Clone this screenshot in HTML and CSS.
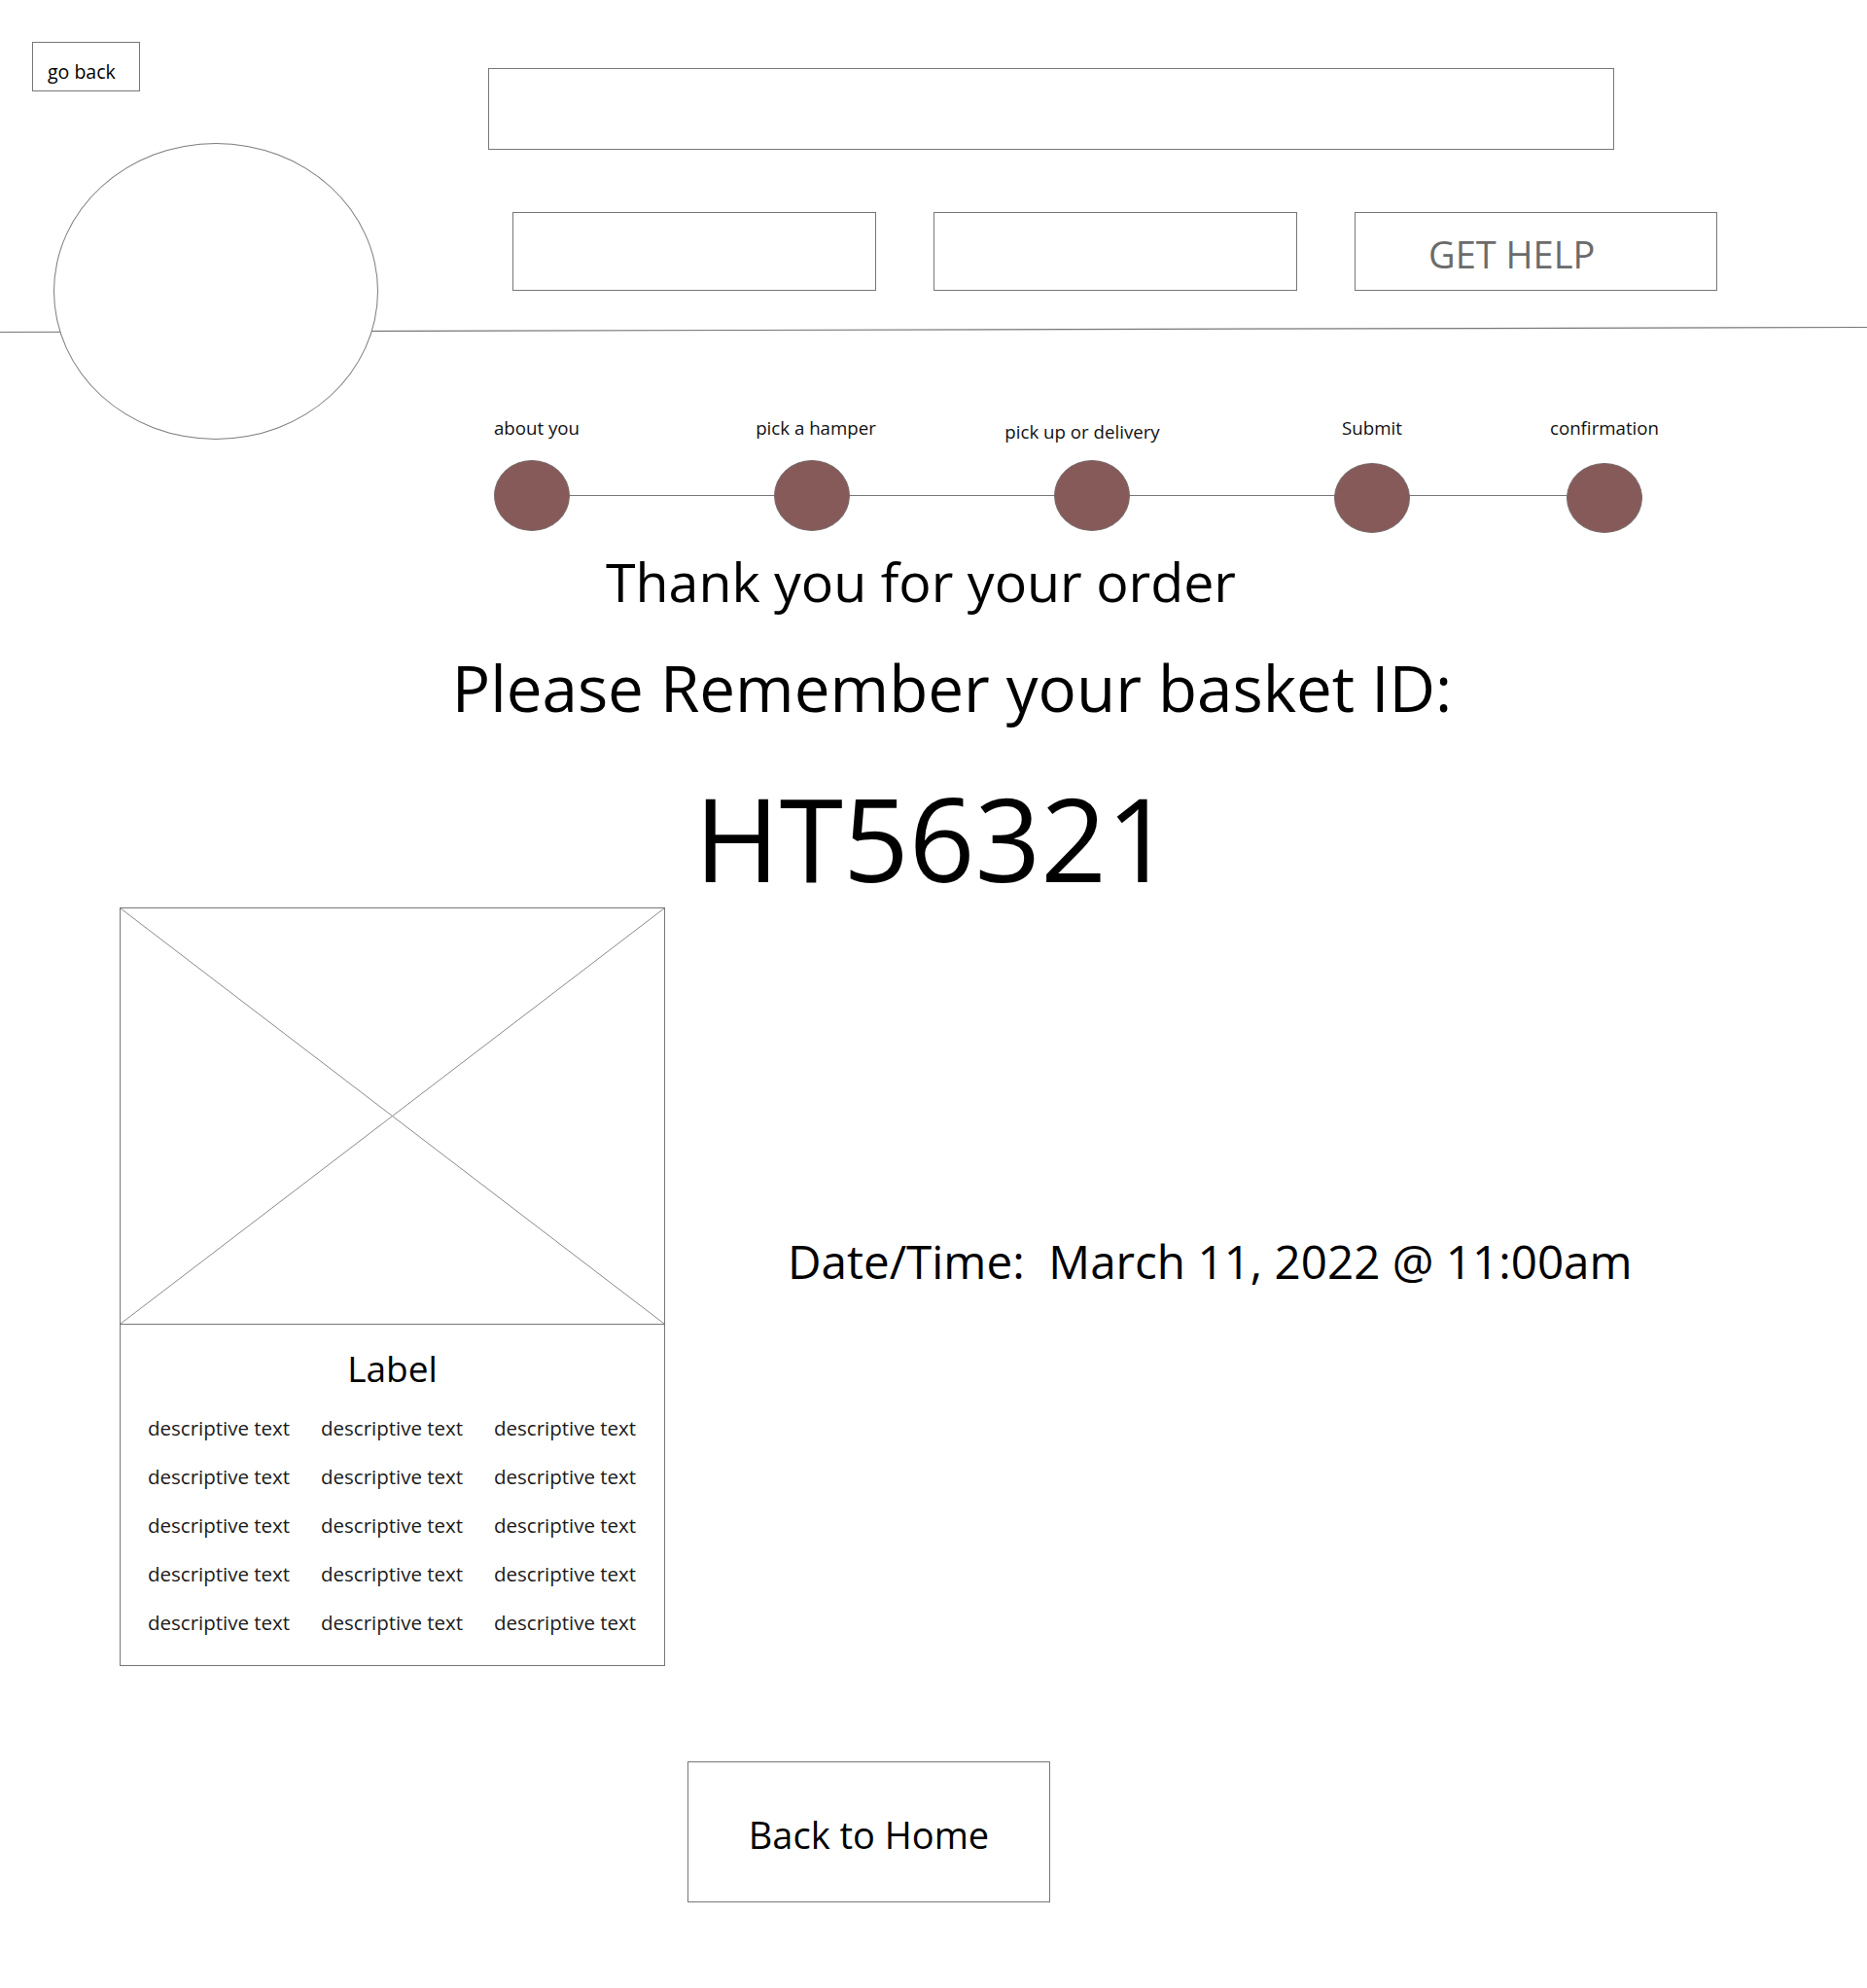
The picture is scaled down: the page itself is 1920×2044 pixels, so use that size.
FILE: index.html
```html
<!DOCTYPE html>
<html lang="en">
<head>
<meta charset="utf-8">
<title>Order confirmation</title>
<link rel="stylesheet" href="styles.css">
</head>
<body>
<header class="header">
  <svg class="divider" viewBox="0 0 1920 427" preserveAspectRatio="none" aria-hidden="true">
    <line x1="0" y1="341.5" x2="1920" y2="336.5" stroke="#777" stroke-width="1.2"/>
  </svg>
  <div class="header-left">
    <button class="go-back">go back</button>
    <div class="logo"></div>
  </div>
  <div class="header-right">
    <div class="search-box"></div>
    <nav class="nav-row">
      <div class="nav-box"></div>
      <div class="nav-box"></div>
      <div class="nav-box nav-help">GET HELP</div>
    </nav>
  </div>
</header>

<section class="stepper">
  <div class="step">
    <span class="step-label step-label--r5">about you</span>
    <span class="step-dot"></span>
  </div>
  <div class="connector"></div>
  <div class="step">
    <span class="step-label step-label--r4">pick a hamper</span>
    <span class="step-dot"></span>
  </div>
  <div class="connector"></div>
  <div class="step">
    <span class="step-label step-label--low">pick up or delivery</span>
    <span class="step-dot"></span>
  </div>
  <div class="connector"></div>
  <div class="step">
    <span class="step-label">Submit</span>
    <span class="step-dot step-dot--low"></span>
  </div>
  <div class="connector connector--short"></div>
  <div class="step">
    <span class="step-label">confirmation</span>
    <span class="step-dot step-dot--low"></span>
  </div>
</section>

<h1 class="thanks">Thank you for your order</h1>
<h2 class="remember">Please Remember your basket ID:</h2>
<p class="basket-id">HT56321</p>

<section class="content">
  <article class="card">
    <div class="card-image">
      <svg viewBox="0 0 560 427" preserveAspectRatio="none" aria-hidden="true">
        <line x1="0" y1="0" x2="560" y2="427" stroke="#8a8a8a" stroke-width="1"/>
        <line x1="560" y1="0" x2="0" y2="427" stroke="#8a8a8a" stroke-width="1"/>
      </svg>
    </div>
    <div class="card-label">Label</div>
    <div class="card-grid">
      <span>descriptive text</span><span>descriptive text</span><span>descriptive text</span>
      <span>descriptive text</span><span>descriptive text</span><span>descriptive text</span>
      <span>descriptive text</span><span>descriptive text</span><span>descriptive text</span>
      <span>descriptive text</span><span>descriptive text</span><span>descriptive text</span>
      <span>descriptive text</span><span>descriptive text</span><span>descriptive text</span>
    </div>
  </article>
  <p class="datetime">Date/Time:&nbsp; March 11, 2022 @ 11:00am</p>
</section>

<div class="home-row">
  <button class="home-btn">Back to Home</button>
</div>
</body>
</html>
```

FILE: styles.css
```css
* { box-sizing: border-box; }

html, body {
  margin: 0;
  padding: 0;
  background: #fff;
}

body {
  width: 1920px;
  min-height: 2044px;
  font-family: "Open Sans", "Noto Sans", sans-serif;
  color: #000;
}

/* ---------- header ---------- */
.header {
  position: relative;
  display: flex;
  height: 427px;
}

.divider {
  position: absolute;
  left: 0;
  top: 0;
  width: 1920px;
  height: 427px;
  z-index: 0;
}

.header-left {
  position: relative;
  z-index: 1;
  width: 502px;
  flex: none;
  display: flex;
  flex-direction: column;
  align-items: flex-start;
}

.go-back {
  flex: none;
  margin: 43px 0 0 33px;
  width: 111px;
  height: 51px;
  padding: 20px 0 10px 15px;
  border: 1px solid #777;
  background: #fff;
  font-family: inherit;
  font-size: 19.5px;
  line-height: 19px;
  text-align: left;
  color: #000;
  display: block;
}

.logo {
  flex: none;
  margin: 53px 0 0 55px;
  width: 334px;
  height: 305px;
  border: 1px solid #7d7d7d;
  border-radius: 50%;
  background: #fff;
}

.header-right {
  position: relative;
  z-index: 1;
  display: flex;
  flex-direction: column;
}

.search-box {
  margin-top: 70px;
  width: 1158px;
  height: 84px;
  border: 1px solid #777;
  background: #fff;
}

.nav-row {
  display: flex;
  gap: 59px;
  margin: 64px 0 0 25px;
}

.nav-box {
  width: 374px;
  height: 81px;
  border: 1px solid #777;
  background: #fff;
}

.nav-help {
  width: 373px;
  padding: 23px 0 0 75px;
  font-size: 38px;
  line-height: 38px;
  color: #6b6b6b;
  white-space: nowrap;
}

/* ---------- stepper ---------- */
.stepper {
  display: flex;
  align-items: flex-start;
  padding-left: 508px;
}

.step {
  width: 78px;
  display: flex;
  flex-direction: column;
  align-items: center;
}

.step-label {
  display: block;
  height: 26px;
  font-size: 18.7px;
  line-height: 26px;
  white-space: nowrap;
  color: #111;
}

.step-label--r5 { margin-left: 10px; }
.step-label--r4 { margin-left: 8px; }

.step-label--low {
  margin-top: 4px;
  margin-bottom: -4px;
  margin-right: 20px;
}

.step-dot {
  display: block;
  margin-top: 20px;
  width: 78px;
  height: 73px;
  border: 1px solid #7a6a6a;
  border-radius: 50%;
  background: #875a5a;
}

.step-dot--low {
  margin-top: 23px;
  height: 72px;
}

.connector {
  width: 210px;
  height: 1px;
  margin-top: 82px;
  background: #777;
}

.connector--short {
  width: 161px;
}

/* ---------- headings ---------- */
.thanks {
  margin: 22px 0 0;
  padding-right: 26px;
  font-size: 55.5px;
  line-height: 56px;
  font-weight: 400;
  text-align: center;
}

.remember {
  margin: 48px 0 0;
  padding-left: 38px;
  font-size: 65.5px;
  line-height: 65px;
  font-weight: 400;
  text-align: center;
}

.basket-id {
  margin: 63px 0 0;
  font-size: 118.5px;
  line-height: 118px;
  text-align: center;
}

/* ---------- content ---------- */
.content {
  display: flex;
  align-items: flex-start;
  margin-top: 13px;
  padding-left: 123px;
}

.card {
  width: 561px;
  border: 1px solid #777;
  padding-bottom: 19px;
}

.card-image {
  height: 428px;
  border-bottom: 1px solid #777;
}

.card-image svg {
  display: block;
  width: 100%;
  height: 427px;
}

.card-label {
  margin-top: 26px;
  font-size: 37px;
  line-height: 37px;
  text-align: center;
}

.card-grid {
  margin-top: 18px;
  padding-left: 28px;
  display: grid;
  grid-template-columns: repeat(3, 178px);
  grid-auto-rows: 50px;
  font-size: 20.5px;
  line-height: 50px;
  color: #1a1a1a;
  white-space: nowrap;
}

.datetime {
  margin: 340px 0 0 126px;
  font-size: 47.6px;
  line-height: 47.5px;
  white-space: nowrap;
}

/* ---------- bottom ---------- */
.home-row {
  display: flex;
  padding-left: 707px;
  margin-top: 98px;
}

.home-btn {
  width: 373px;
  height: 145px;
  padding: 4px 0 0;
  border: 1px solid #777;
  background: #fff;
  font-family: inherit;
  font-size: 38px;
  line-height: 38px;
  color: #000;
}
```
